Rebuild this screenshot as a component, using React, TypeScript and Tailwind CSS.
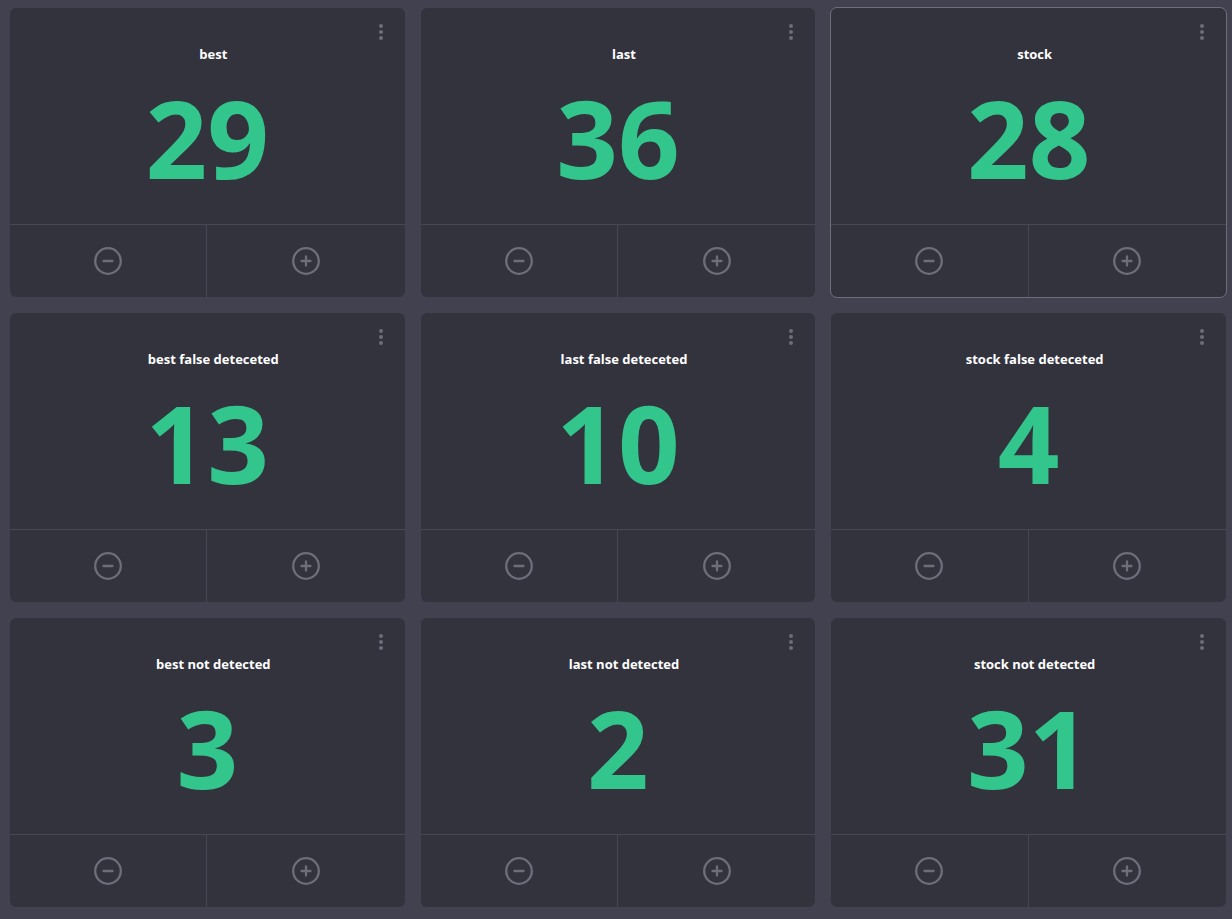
const counters = [
  { title: "best", value: 29 },
  { title: "last", value: 36 },
  { title: "stock", value: 28, active: true },
  { title: "best false deteceted", value: 13 },
  { title: "last false deteceted", value: 10 },
  { title: "stock false deteceted", value: 4 },
  { title: "best not detected", value: 3 },
  { title: "last not detected", value: 2 },
  { title: "stock not detected", value: 31 },
];

function RoundIcon({ plus }: { plus?: boolean }) {
  return (
    <svg width="30" height="30" viewBox="0 0 30 30" fill="none" stroke="#6e6d7a" strokeWidth="2.3" strokeLinecap="round">
      <circle cx="15" cy="15" r="12.8" />
      <line x1="10.5" y1="15" x2="19.5" y2="15" />
      {plus && <line x1="15" y1="10.5" x2="15" y2="19.5" />}
    </svg>
  );
}

function Counter({ title, value, active }: { title: string; value: number; active?: boolean }) {
  return (
    <div
      className={
        "h-[289px] rounded-[6px] bg-[#33333e] flex flex-col overflow-hidden " +
        (active ? "outline outline-[1.5px] outline-[#6e6d7a]" : "")
      }
    >
      <div className="relative h-[217px] flex flex-col items-center border-b border-[#474655]">
        <div className="absolute right-[22px] top-[16px] flex flex-col gap-[2px]">
          <span className="w-[4px] h-[4px] rounded-full bg-[#6d6c79]" />
          <span className="w-[4px] h-[4px] rounded-full bg-[#6d6c79]" />
          <span className="w-[4px] h-[4px] rounded-full bg-[#6d6c79]" />
        </div>
        <div className="mt-[38px] pl-3 text-[13px] leading-[16px] font-bold text-white">{title}</div>
        <div className="mt-[22px] text-[108px] leading-none font-bold text-[#32c68c]">{value}</div>
      </div>
      <div className="flex-1 grid grid-cols-2">
        <button className="flex items-center justify-center border-r border-[#474655]">
          <RoundIcon />
        </button>
        <button className="flex items-center justify-center">
          <RoundIcon plus />
        </button>
      </div>
    </div>
  );
}

export default function App() {
  return (
    <div
      className="min-h-[919px] bg-[#42414f] pl-[10px] pr-[6px] pt-[8px] pb-[12px]"
      style={{ fontFamily: '"Open Sans", "Noto Sans", sans-serif' }}
    >
      <div className="grid grid-cols-3 gap-x-[16px] gap-y-[16px]">
        {counters.map((c) => (
          <Counter key={c.title} {...c} />
        ))}
      </div>
    </div>
  );
}
